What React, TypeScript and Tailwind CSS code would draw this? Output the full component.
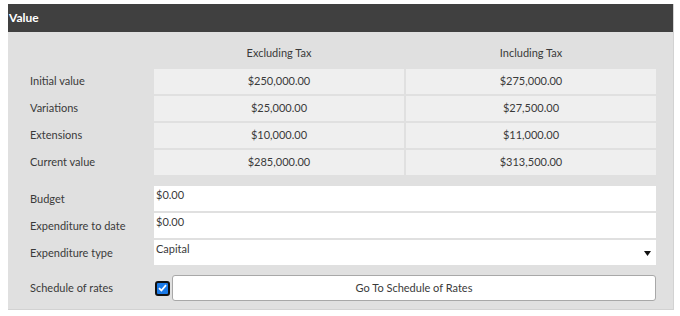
const rows = [
  { label: "Initial value", ex: "$250,000.00", inc: "$275,000.00" },
  { label: "Variations", ex: "$25,000.00", inc: "$27,500.00" },
  { label: "Extensions", ex: "$10,000.00", inc: "$11,000.00" },
  { label: "Current value", ex: "$285,000.00", inc: "$313,500.00" },
];

const fields = [
  { label: "Budget", value: "$0.00" },
  { label: "Expenditure to date", value: "$0.00" },
];

const App = () => {
  return (
    <div className="w-[680px] h-[316px] bg-white pt-[4px] pl-[8px] font-['Lato','Liberation_Sans',sans-serif] text-[11px] text-[#3a3a3a]">
      <div className="w-[666px] h-[306px] bg-[#e0e0e0] border-r border-b border-[#d2d2d2]">
        {/* Header */}
        <div className="h-[28px] bg-[#404040] flex items-center text-white font-bold text-[12px] pl-[1px]">
          Value
        </div>

        <div className="pl-[22px]">
          {/* Column headings */}
          <div className="grid grid-cols-[122px_250px_250px] gap-x-[2px] h-[37px] pt-[6px] items-center">
            <div />
            <div className="text-center">Excluding Tax</div>
            <div className="text-center">Including Tax</div>
          </div>

          {/* Value table */}
          <div className="flex flex-col gap-[2px]">
            {rows.map((r) => (
              <div key={r.label} className="grid grid-cols-[122px_250px_250px] gap-x-[2px] h-[25px]">
                <div className="flex items-center">{r.label}</div>
                <div className="bg-[#efefef] flex items-center justify-center">{r.ex}</div>
                <div className="bg-[#efefef] flex items-center justify-center">{r.inc}</div>
              </div>
            ))}
          </div>

          {/* Inputs */}
          <div className="flex flex-col gap-[2px] mt-[11px]">
            {fields.map((f) => (
              <div key={f.label} className="grid grid-cols-[124px_502px] h-[25px]">
                <div className="flex items-center pt-[1px]">{f.label}</div>
                <div className="bg-white px-[2px] pt-[2px] leading-[14px]">{f.value}</div>
              </div>
            ))}
            <div className="grid grid-cols-[124px_502px] h-[25px]">
              <div className="flex items-center pt-[1px]">Expenditure type</div>
              <div className="bg-white px-[2px] pt-[2px] leading-[14px] relative">
                Capital
                <svg className="absolute right-[5px] top-[11px]" width="7" height="5" viewBox="0 0 7 5">
                  <path d="M0 0H7L3.5 5Z" fill="#111" />
                </svg>
              </div>
            </div>
          </div>

          {/* Schedule of rates */}
          <div className="grid grid-cols-[124px_502px] h-[26px] mt-[10px]">
            <div className="flex items-center">Schedule of rates</div>
            <div className="flex items-center gap-[2px]">
              <span className="ml-[1px] w-[15px] h-[15px] rounded-[3px] border-2 border-[#111] bg-[#1a7ae8] flex items-center justify-center">
                <svg width="9" height="8" viewBox="0 0 9 8">
                  <path d="M1 4.2L3.4 6.5L8 1.2" stroke="white" strokeWidth="1.8" fill="none" />
                </svg>
              </span>
              <button className="flex-1 h-[26px] bg-white border border-[#a8a8a8] rounded-[3px] text-center text-[#3a3a3a]">
                Go To Schedule of Rates
              </button>
            </div>
          </div>
        </div>
      </div>
    </div>
  );
};

export default App;
